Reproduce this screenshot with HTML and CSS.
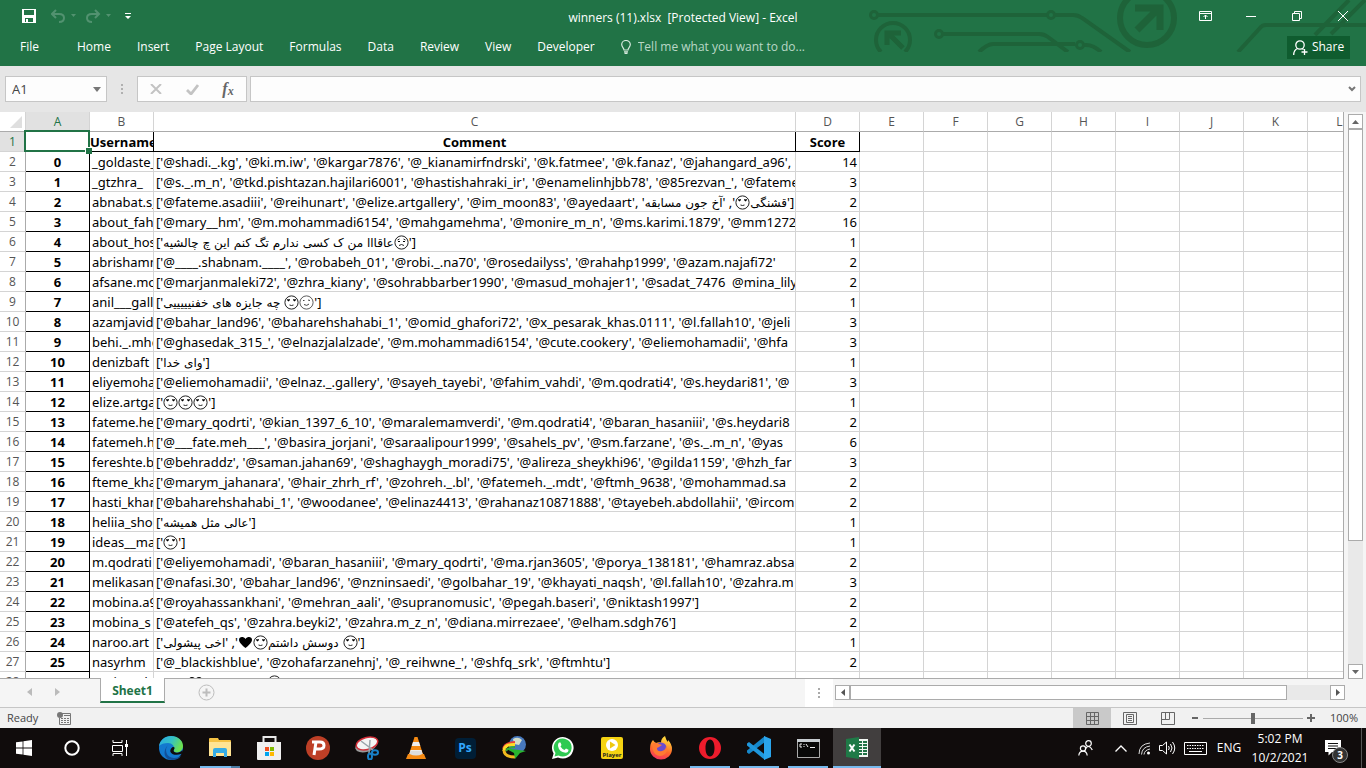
FILE: index.html
```html
<!DOCTYPE html>
<html lang="en">
<head>
<meta charset="utf-8">
<title>winners (11).xlsx [Protected View] - Excel</title>
<link rel="stylesheet" href="styles.css">
</head>
<body>
<svg class="sprite" aria-hidden="true">
  <symbol id="love" viewBox="0 0 15 15"><circle cx="7.500" cy="7.500" r="6.600" fill="#fff" stroke="#222"/><path d="M3 4.500q1-1 1.500 0q1-1 1.500 0q0 1-1.500 2q-1.500-1-1.500-2M9 4.500q1-1 1.500 0q1-1 1.500 0q0 1-1.500 2q-1.500-1-1.500-2" fill="#000"/><path d="M5.500 10q2 1 4 0" fill="none" stroke="#222"/></symbol>
  <symbol id="wink" viewBox="0 0 15 15"><circle cx="7.500" cy="7.500" r="6.600" fill="#fff" stroke="#333" stroke-width=".8"/><path d="M4 5.500h1.500M9 5l2 .5M5 9.500q3 2 5-.5" fill="none" stroke="#444"/></symbol>
  <symbol id="sad" viewBox="0 0 15 15"><circle cx="7.500" cy="7.500" r="6.600" fill="#fff" stroke="#222"/><path d="M3.500 5l2-1M9.500 4l2 1M5 10.500q2.500-2 5 0" fill="none" stroke="#222"/><path d="M4 6.500h2M9 6.500h2" stroke="#000"/></symbol>
  <symbol id="heart" viewBox="0 0 15 15"><path d="M7.500 13C4 10 1 7.500 1 4.700C1 1.500 5.500 1 7.500 4C9.500 1 14 1.500 14 4.700C14 7.500 11 10 7.500 13z"/></symbol>
</svg>
<div class="app">
  <header class="ribbon">
    <svg class="circuit" width="501" height="52" viewBox="0 0 501 52" fill="none" stroke="#1e6339" stroke-width="4" aria-hidden="true">
      <circle cx="9" cy="15" r="3.500" stroke-width="3"/><path d="M13 15h169"/><circle cx="186" cy="15" r="3.500" stroke-width="3"/><path d="M190 15h18q5 0 9 3l48 34"/>
      <circle cx="74" cy="34" r="3.500" stroke-width="3"/><path d="M78 34h96q5 0 9 3l20 15"/>
      <path d="M114 52q8-8 14-8h82"/><circle cx="215" cy="45" r="3.500" stroke-width="3"/><path d="M219 45q9-1 17 7"/>
      <path d="M16 52a17 17 0 1 1 24 0"/><path d="M22 45V33h14M24 34l14 14" stroke-width="5"/>
      <circle cx="282" cy="18" r="27" stroke-width="6"/><path d="M270 8h25v22M294 8L272 30" stroke-width="7"/>
      <path d="M373 52l22-24q2-3 6-3h100M450 35l34-35M466 34l34-34" stroke-width="4"/>
    </svg>
    <div class="titlebar">
      <div class="quick">
        <button aria-label="Save"><svg width="14" height="14" viewBox="0 0 14 14"><path d="M0 0h14v14H0zM2 1v5h10V1zM3 9v4h1v-3h2v3h5V9z" fill="#fff" fill-rule="evenodd"/></svg></button>
        <button class="dim undo" aria-label="Undo"><svg width="26" height="14" viewBox="0 0 26 14" fill="none" stroke="#529270" stroke-width="2"><path d="M5 1L1 5l4 4M1 5h7q5 0 5 4t-5 4"/><path d="M20 5h5l-2.500 3z" fill="#529270" stroke="none"/></svg></button>
        <button class="dim" aria-label="Redo"><svg width="26" height="14" viewBox="0 0 26 14" fill="none" stroke="#529270" stroke-width="2"><path d="M9 1l4 4-4 4M13 5H6q-5 0-5 4t5 4"/><path d="M20 5h5l-2.500 3z" fill="#529270" stroke="none"/></svg></button>
        <button aria-label="Customize toolbar"><svg width="6" height="7" viewBox="0 0 6 7"><path d="M0 0h6v1H0zM0 3h6L3 6z" fill="#fff"/></svg></button>
      </div>
      <h1>winners (11).xlsx&nbsp; [Protected View] - Excel</h1>
      <div class="winbuttons">
        <button aria-label="Ribbon display options"><svg width="13" height="10" viewBox="0 0 13 10" fill="none" stroke="#fff"><path d="M.5.5h12v9H.5zM0 2.500h13M6.500 8V4M4.500 6l2-2 2 2"/></svg></button>
        <button aria-label="Minimize"><svg width="10" height="10" viewBox="0 0 10 10"><path d="M0 5.500h10" stroke="#fff"/></svg></button>
        <button aria-label="Restore"><svg width="10" height="10" viewBox="0 0 10 10" fill="none" stroke="#fff"><path d="M.5 2.500h7v7h-7zM2.500 2.500v-2h7v7h-2"/></svg></button>
        <button aria-label="Close"><svg width="10" height="10" viewBox="0 0 10 10"><path d="M0 0l10 10M10 0L0 10" stroke="#fff"/></svg></button>
      </div>
    </div>
    <nav class="tabs">
      <a class="file" href="#">File</a><a href="#">Home</a><a href="#">Insert</a><a href="#">Page Layout</a><a href="#">Formulas</a><a href="#">Data</a><a href="#">Review</a><a href="#">View</a><a href="#">Developer</a>
      <label class="tell"><svg width="10" height="14" viewBox="0 0 10 14" fill="none" stroke="#d9ebe0" stroke-width="1.200"><path d="M3 10C3 8 .7 7 .7 4.500a4.300 4 0 0 1 8.600 0C9.300 7 7 8 7 10zM3 11.800h4M3.500 13.400h3"/></svg><input type="text" placeholder="Tell me what you want to do..." aria-label="Tell me what you want to do"></label>
      <button class="share"><svg width="15" height="15" viewBox="0 0 15 15" fill="none" stroke="#fff" stroke-width="1.300"><circle cx="7" cy="5" r="4.200"/><path d="M.7 15q0-5 4-6.500M9 8.500l1.500 1M11.500 9v6M8.500 12h6"/></svg>Share</button>
    </nav>
  </header>

  <section class="formulabar">
    <div class="namebox"><input type="text" value="A1" aria-label="Name box"><button aria-label="Choose name"><svg width="8" height="5" viewBox="0 0 8 5"><path d="M0 0h8L4 5z" fill="#777"/></svg></button></div>
    <svg class="dots" width="2" height="10" viewBox="0 0 2 10" fill="#b0b0b0"><path d="M0 0h2v2H0zM0 4h2v2H0zM0 8h2v2H0z"/></svg>
    <div class="fxgroup">
      <button aria-label="Cancel"><svg width="12" height="10" viewBox="0 0 12 10"><path d="M1 0l10 10M11 0L1 10" stroke="#c3c3c3" stroke-width="2"/></svg></button>
      <button aria-label="Enter"><svg width="13" height="11" viewBox="0 0 13 11" fill="none"><path d="M1 6l4 4 7-9" stroke="#c3c3c3" stroke-width="2.800"/></svg></button>
      <button class="fx" aria-label="Insert function">f<small>x</small></button>
    </div>
    <div class="formula"><input type="text" aria-label="Formula"><button aria-label="Expand"><svg width="8" height="6" viewBox="0 0 8 6" fill="none"><path d="M1 1l3 3 3-3" stroke="#777" stroke-width="2"/></svg></button></div>
  </section>

  <main class="sheet">
    <div class="gridview">
      <table>
        <colgroup><col class="c-row"><col class="c-std"><col class="c-std"><col class="c-wide"><col class="c-std" span="9"></colgroup>
        <thead><tr><th class="corner"><svg width="12" height="12" viewBox="0 0 12 12"><path d="M12 0v12H0z" fill="#dfdfdf"/></svg></th><th class="on">A</th><th>B</th><th>C</th><th>D</th><th>E</th><th>F</th><th>G</th><th>H</th><th>I</th><th>J</th><th>K</th><th>L</th></tr></thead>
        <tbody>
          <tr class="heads"><th class="on">1</th><td class="cursor"></td><td>Username</td><td>Comment</td><td>Score</td><td></td><td></td><td></td><td></td><td></td><td></td><td></td><td></td></tr>
          <tr><th>2</th><td>0</td><td>_goldaste_</td><td>['@shadi._.kg', '@ki.m.iw', '@kargar7876', '@_kianamirfndrski', '@k.fatmee', '@k.fanaz', '@jahangard_a96', '@</td><td>14</td><td></td><td></td><td></td><td></td><td></td><td></td><td></td><td></td></tr>
          <tr><th>3</th><td>1</td><td>_gtzhra_</td><td>['@s._.m_n', '@tkd.pishtazan.hajilari6001', '@hastishahraki_ir', '@enamelinhjbb78', '@85rezvan_', '@fateme</td><td>3</td><td></td><td></td><td></td><td></td><td></td><td></td><td></td><td></td></tr>
          <tr><th>4</th><td>2</td><td>abnabat.s_</td><td>['@fateme.asadiii', '@reihunart', '@elize.artgallery', '@im_moon83', '@ayedaart', '<span class="fa">قشنگی</span><svg class="emo"><use href="#love"/></svg>', '<span class="fa">آخ جون مسابقه</span>']</td><td>2</td><td></td><td></td><td></td><td></td><td></td><td></td><td></td><td></td></tr>
          <tr><th>5</th><td>3</td><td>about_fahi</td><td>['@mary__hm', '@m.mohammadi6154', '@mahgamehma', '@monire_m_n', '@ms.karimi.1879', '@mm1272</td><td>16</td><td></td><td></td><td></td><td></td><td></td><td></td><td></td><td></td></tr>
          <tr><th>6</th><td>4</td><td>about_hose</td><td>['<span class="fa">عاقااا من ک کسی ندارم تگ کنم این چ چالشیه</span><svg class="emo"><use href="#sad"/></svg>']</td><td>1</td><td></td><td></td><td></td><td></td><td></td><td></td><td></td><td></td></tr>
          <tr><th>7</th><td>5</td><td>abrishamm</td><td>['@____.shabnam.____', '@robabeh_01', '@robi._.na70', '@rosedailyss', '@rahahp1999', '@azam.najafi72'</td><td>2</td><td></td><td></td><td></td><td></td><td></td><td></td><td></td><td></td></tr>
          <tr><th>8</th><td>6</td><td>afsane.moh</td><td>['@marjanmaleki72', '@zhra_kiany', '@sohrabbarber1990', '@masud_mohajer1', '@sadat_7476&nbsp; @mina_lily</td><td>2</td><td></td><td></td><td></td><td></td><td></td><td></td><td></td><td></td></tr>
          <tr><th>9</th><td>7</td><td>anil___gall</td><td>['<span class="fa">چه جایزه های خفنیییییی </span><svg class="emo"><use href="#love"/></svg><svg class="emo"><use href="#wink"/></svg>']</td><td>1</td><td></td><td></td><td></td><td></td><td></td><td></td><td></td><td></td></tr>
          <tr><th>10</th><td>8</td><td>azamjavid</td><td>['@bahar_land96', '@baharehshahabi_1', '@omid_ghafori72', '@x_pesarak_khas.0111', '@l.fallah10', '@jeli</td><td>3</td><td></td><td></td><td></td><td></td><td></td><td></td><td></td><td></td></tr>
          <tr><th>11</th><td>9</td><td>behi._.mhd</td><td>['@ghasedak_315_', '@elnazjalalzade', '@m.mohammadi6154', '@cute.cookery', '@eliemohamadii', '@hfa</td><td>3</td><td></td><td></td><td></td><td></td><td></td><td></td><td></td><td></td></tr>
          <tr><th>12</th><td>10</td><td>denizbaft</td><td>['<span class="fa">وای خدا</span>']</td><td>1</td><td></td><td></td><td></td><td></td><td></td><td></td><td></td><td></td></tr>
          <tr><th>13</th><td>11</td><td>eliyemoham</td><td>['@eliemohamadii', '@elnaz._.gallery', '@sayeh_tayebi', '@fahim_vahdi', '@m.qodrati4', '@s.heydari81', '@</td><td>3</td><td></td><td></td><td></td><td></td><td></td><td></td><td></td><td></td></tr>
          <tr><th>14</th><td>12</td><td>elize.artgall</td><td>['<svg class="emo"><use href="#love"/></svg><svg class="emo"><use href="#love"/></svg><svg class="emo"><use href="#love"/></svg>']</td><td>1</td><td></td><td></td><td></td><td></td><td></td><td></td><td></td><td></td></tr>
          <tr><th>15</th><td>13</td><td>fateme.hey</td><td>['@mary_qodrti', '@kian_1397_6_10', '@maralemamverdi', '@m.qodrati4', '@baran_hasaniii', '@s.heydari8</td><td>2</td><td></td><td></td><td></td><td></td><td></td><td></td><td></td><td></td></tr>
          <tr><th>16</th><td>14</td><td>fatemeh.ha</td><td>['@___fate.meh___', '@basira_jorjani', '@saraalipour1999', '@sahels_pv', '@sm.farzane', '@s._.m_n', '@yas</td><td>6</td><td></td><td></td><td></td><td></td><td></td><td></td><td></td><td></td></tr>
          <tr><th>17</th><td>15</td><td>fereshte.ba</td><td>['@behraddz', '@saman.jahan69', '@shaghaygh_moradi75', '@alireza_sheykhi96', '@gilda1159', '@hzh_far</td><td>3</td><td></td><td></td><td></td><td></td><td></td><td></td><td></td><td></td></tr>
          <tr><th>18</th><td>16</td><td>fteme_kha</td><td>['@marym_jahanara', '@hair_zhrh_rf', '@zohreh._.bl', '@fatemeh._.mdt', '@ftmh_9638', '@mohammad.sa</td><td>2</td><td></td><td></td><td></td><td></td><td></td><td></td><td></td><td></td></tr>
          <tr><th>19</th><td>17</td><td>hasti_khani</td><td>['@baharehshahabi_1', '@woodanee', '@elinaz4413', '@rahanaz10871888', '@tayebeh.abdollahii', '@ircom</td><td>2</td><td></td><td></td><td></td><td></td><td></td><td></td><td></td><td></td></tr>
          <tr><th>20</th><td>18</td><td>heliia_shop</td><td>['<span class="fa">عالی مثل همیشه</span>']</td><td>1</td><td></td><td></td><td></td><td></td><td></td><td></td><td></td><td></td></tr>
          <tr><th>21</th><td>19</td><td>ideas__mah</td><td>['<svg class="emo"><use href="#love"/></svg>']</td><td>1</td><td></td><td></td><td></td><td></td><td></td><td></td><td></td><td></td></tr>
          <tr><th>22</th><td>20</td><td>m.qodrati</td><td>['@eliyemohamadi', '@baran_hasaniii', '@mary_qodrti', '@ma.rjan3605', '@porya_138181', '@hamraz.absa</td><td>2</td><td></td><td></td><td></td><td></td><td></td><td></td><td></td><td></td></tr>
          <tr><th>23</th><td>21</td><td>melikasana</td><td>['@nafasi.30', '@bahar_land96', '@nzninsaedi', '@golbahar_19', '@khayati_naqsh', '@l.fallah10', '@zahra.m</td><td>3</td><td></td><td></td><td></td><td></td><td></td><td></td><td></td><td></td></tr>
          <tr><th>24</th><td>22</td><td>mobina.a98</td><td>['@royahassankhani', '@mehran_aali', '@supranomusic', '@pegah.baseri', '@niktash1997']</td><td>2</td><td></td><td></td><td></td><td></td><td></td><td></td><td></td><td></td></tr>
          <tr><th>25</th><td>23</td><td>mobina_s</td><td>['@atefeh_qs', '@zahra.beyki2', '@zahra.m_z_n', '@diana.mirrezaee', '@elham.sdgh76']</td><td>2</td><td></td><td></td><td></td><td></td><td></td><td></td><td></td><td></td></tr>
          <tr><th>26</th><td>24</td><td>naroo.art</td><td>['<span class="fa">دوسش داشتم</span><svg class="emo"><use href="#love"/></svg><svg class="emo"><use href="#heart"/></svg>', '<span class="fa">اخی پیشولی </span><svg class="emo"><use href="#love"/></svg>']</td><td>1</td><td></td><td></td><td></td><td></td><td></td><td></td><td></td><td></td></tr>
          <tr><th>27</th><td>25</td><td>nasyrhm</td><td>['@_blackishblue', '@zohafarzanehnj', '@_reihwne_', '@shfq_srk', '@ftmhtu']</td><td>2</td><td></td><td></td><td></td><td></td><td></td><td></td><td></td><td></td></tr>
          <tr><th>28</th><td>26</td><td>nasim.ad</td><td>['<span class="fa">عالیه ممنون</span><svg class="emo"><use href="#heart"/></svg><span class="fa">خیلی </span><svg class="emo"><use href="#sad"/></svg>']</td><td>1</td><td></td><td></td><td></td><td></td><td></td><td></td><td></td><td></td></tr>
        </tbody>
      </table>
    </div>
    <div class="vscroll">
      <button aria-label="Scroll up"><svg width="7" height="4" viewBox="0 0 7 4"><path d="M3.500 0L7 4H0z" fill="#666"/></svg></button>
      <div class="vtrack"><div class="vthumb"></div></div>
      <button aria-label="Scroll down"><svg width="7" height="4" viewBox="0 0 7 4"><path d="M0 0h7L3.500 4z" fill="#666"/></svg></button>
    </div>
  </main>

  <div class="sheetbar">
    <div class="sheetnav">
      <button aria-label="Previous sheet"><svg width="5" height="8" viewBox="0 0 5 8"><path d="M5 0v8L0 4z" fill="#bbb"/></svg></button>
      <button aria-label="Next sheet"><svg width="5" height="8" viewBox="0 0 5 8"><path d="M0 0v8l5-4z" fill="#bbb"/></svg></button>
    </div>
    <button class="sheettab">Sheet1</button>
    <button class="addsheet" aria-label="New sheet"><svg width="17" height="17" viewBox="0 0 17 17" fill="none" stroke="#bdbdbd"><circle cx="8.500" cy="8.500" r="7.500"/><path d="M8.500 4.500v8M4.500 8.500h8" stroke-width="2"/></svg></button>
    <div class="splitter"><svg width="2" height="10" viewBox="0 0 2 10" fill="#aaa"><path d="M0 0h2v2H0zM0 4h2v2H0zM0 8h2v2H0z"/></svg></div>
    <div class="hscroll">
      <button aria-label="Scroll left"><svg width="4" height="7" viewBox="0 0 4 7"><path d="M4 0v7L0 3.500z" fill="#555"/></svg></button>
      <div class="htrack"><div class="hthumb"></div></div>
      <button aria-label="Scroll right"><svg width="4" height="7" viewBox="0 0 4 7"><path d="M0 0v7l4-3.500z" fill="#555"/></svg></button>
    </div>
  </div>

  <footer class="status">
    <span>Ready</span>
    <button class="macro" aria-label="Record macro"><svg width="14" height="13" viewBox="0 0 14 13"><path d="M5 1.500h8.500v11h-11V6M7 3.500h6" fill="none" stroke="#777"/><path d="M4 6h2v1H4zM7 6h2v1H7zM10 6h2v1h-2zM4 8h2v1H4zM7 8h2v1H7zM10 8h2v1h-2zM4 10h2v1H4zM7 10h2v1H7zM10 10h2v1h-2z" fill="#777"/><circle cx="3" cy="3" r="3" fill="#777"/></svg></button>
    <div class="views">
      <button class="on" aria-label="Normal"><svg width="13" height="13" viewBox="0 0 13 13" fill="none" stroke="#666"><path d="M.5.5h12v12H.5zM4.500 0v13M8.500 0v13M0 4.500h13M0 8.500h13"/></svg></button>
      <button aria-label="Page layout"><svg width="14" height="13" viewBox="0 0 14 13" fill="none" stroke="#666"><path d="M.5.5h13v12H.5zM3.500 2.500h7v8h-7zM5 4.500h4M5 6.500h4M5 8.500h4"/></svg></button>
      <button aria-label="Page break preview"><svg width="14" height="13" viewBox="0 0 14 13" fill="none" stroke="#666"><path d="M.5.5h13v12H.5zM.5 7.500h8v-7M4.500 0v7"/></svg></button>
    </div>
    <div class="zoom">
      <button aria-label="Zoom out"><svg width="7" height="8" viewBox="0 0 7 8"><path d="M0 4h6" stroke="#666" stroke-width="2"/></svg></button>
      <input type="range" min="0" max="100" value="50" aria-label="Zoom">
      <button aria-label="Zoom in"><svg width="8" height="8" viewBox="0 0 8 8"><path d="M0 4h8M4 0v8" stroke="#666" stroke-width="2"/></svg></button>
    </div>
    <span class="percent">100%</span>
  </footer>

  <nav class="taskbar">
    <button aria-label="Start"><svg width="16" height="16" viewBox="0 0 16 16" fill="#fff"><path d="M0 2.300L6.600 1.400v6.200H0zM7.400 1.300L16 0v7.600H7.400zM0 8.400h6.600v6.200L0 13.700zM7.400 8.400H16V16l-8.600-1.200z"/></svg></button>
    <button aria-label="Search"><svg width="16" height="16" viewBox="0 0 16 16"><circle cx="8" cy="8" r="6.700" fill="none" stroke="#fff" stroke-width="2"/></svg></button>
    <button aria-label="Task view"><svg width="16" height="16" viewBox="0 0 16 16" fill="none" stroke="#fff"><path d="M1 0v2.500h9V0M.5 5.500h10v6H.5zM1 16v-2.500h9V16M14.500 0v16"/><path d="M13 4h3v3h-3z" fill="#fff" stroke="none"/></svg></button>
    <div class="apps">
      <button aria-label="Edge"><svg width="24" height="24" viewBox="0 0 24 24"><defs><linearGradient id="eg" x2="1" y2=".4"><stop stop-color="#27a9e6"/><stop offset=".55" stop-color="#35c1c4"/><stop offset="1" stop-color="#6be04f"/></linearGradient></defs><circle cx="12" cy="12" r="12" fill="#1379cf"/><path d="M0 10C1 4 6 0 12 0c7 0 12 4.500 12 10 0 4-3 6.500-6.500 6.500-2.500 0-3.500-1.500-2.500-3C16 10 13 7 9 7c-4 0-7 1-9 3z" fill="url(#eg)"/><path d="M9 9c-4 4-2 13 6 13 3 0 5-1 7-2-2 3-6 4-9 4C5 24 3 15 9 9z" fill="#12509a"/><path d="M15.500 11.500c.5 1.500-2 3 0 4.500 2 1.500 6 .5 8-2l.5 3.500-2 .5c-4 1.500-9 1-10.500-2-1-3 2.500-6.500 4-4.500z" fill="#100c0c"/></svg></button>
      <button class="run split" aria-label="File Explorer"><svg width="22" height="20" viewBox="0 0 22 20"><path d="M0 1q0-1 1-1h8l1 2h11q1 0 1 1v15H0z" fill="#f5c244"/><path d="M0 4h22v14H0z" fill="#ffe494"/><path d="M4 19v-7q0-2 2-2h10q2 0 2 2v7h-3v-4H7v4z" fill="#35ace6"/></svg></button>
      <button aria-label="Store"><svg width="24" height="24" viewBox="0 0 24 24"><path d="M6.500 7V1h12v6" fill="none" stroke="#e8e8e8" stroke-width="2"/><path d="M0 6h24v17q0 1-1 1H1q-1 0-1-1z" fill="#f0f0f0"/><path d="M8 11h4v4H8z" fill="#f25022"/><path d="M13 11h4v4h-4z" fill="#7fba00"/><path d="M8 16h4v4H8z" fill="#00a4ef"/><path d="M13 16h4v4h-4z" fill="#ffb900"/></svg></button>
      <button aria-label="Psiphon"><svg width="24" height="24" viewBox="0 0 24 24"><circle cx="12" cy="12" r="12" fill="#bd3f26"/><path d="M6 6h8q4 0 4 3.500T13 13H9M10 6L8 19" fill="none" stroke="#fff" stroke-width="3"/></svg></button>
      <button aria-label="Snipping Tool"><svg width="24" height="24" viewBox="0 0 24 24"><ellipse cx="11" cy="10" rx="11" ry="6" transform="rotate(-15 11 10)" fill="#999"/><ellipse cx="12" cy="7.500" rx="11" ry="6" transform="rotate(-15 12 7.500)" fill="#f4f4f4" stroke="#d22e38" stroke-width="1.500"/><path d="M6 5l12 9M15 4l-1 13" stroke="#9aa4aa" stroke-width="1.500"/><g fill="none" stroke="#1881c9" stroke-width="2"><ellipse cx="20" cy="16.500" rx="3" ry="2.200"/><ellipse cx="15" cy="20.500" rx="2" ry="3"/></g></svg></button>
      <button aria-label="VLC"><svg width="20" height="24" viewBox="0 0 20 24"><path d="M8.500 1h3l6 19h-15z" fill="#f58a13"/><path d="M7 6h6l1.300 4H5.700zM4.500 14h11l1 4h-13z" fill="#eee"/><path d="M2 18h16l2 5H0z" fill="#f58a13"/><path d="M3.500 18q6.500 3 13 0l-1-3h-11z" fill="#ddd"/></svg></button>
      <button aria-label="Photoshop"><span class="ps">Ps</span></button>
      <button aria-label="Download Manager"><svg width="24" height="24" viewBox="0 0 24 24" fill="none"><circle cx="15.500" cy="8.500" r="8.500" fill="#4778bd"/><path d="M11 3q5-3 9 1l-3 5-5-1z" fill="#d2dcc9"/><path d="M1.500 13q0-6 11.500-7" stroke="#ed4435" stroke-width="2"/><path d="M2 15q0-7 11-6.500" stroke="#ffdc27" stroke-width="3"/><path d="M2 14q0 7 11 7" stroke="#f2b91e" stroke-width="3"/><path d="M4 15q2-4 9-4" stroke="#35a83b" stroke-width="2"/><path d="M3 12l21 3-6 2-5 6-1-6z" fill="#28b52e"/></svg></button>
      <button aria-label="WhatsApp"><svg width="22" height="22" viewBox="0 0 22 22"><path d="M0 22l1.600-5.500A10.800 10.800 0 1 1 6 20.500z" fill="#fff"/><path d="M2.500 19.500l1-3.500a9 9 0 1 1 3 2.500z" fill="#2fca52"/><path d="M7 5.500l1.500 0 1 2.500-1 1.500q1.500 2.500 4 3.500l1.500-1.500 2.500 1.300q0 3-3 3Q7 15 6 9q-.2-2.500 1-3.500z" fill="#fff"/></svg></button>
      <button aria-label="Player"><span class="player"><svg width="12" height="12" viewBox="0 0 12 12"><circle cx="6" cy="6" r="6" fill="#fff"/><path d="M4 2.500v7L9.500 6z" fill="#eec80f"/></svg>Player</span></button>
      <button aria-label="Firefox"><svg width="24" height="24" viewBox="0 0 24 24"><defs><linearGradient id="ff" x2=".3" y1="1" y2="0"><stop stop-color="#f4266c"/><stop offset=".5" stop-color="#ff6a2a"/><stop offset="1" stop-color="#ffd43a"/></linearGradient></defs><path d="M4 4q1 2 3 3 2-1 5-.5Q12 2 16 0q1 4 3 6V4q4 4 4 9a11 10.500 0 0 1-22 0Q1 7 4 4z" fill="url(#ff)"/><circle cx="12" cy="12" r="5.500" fill="#6a4bd0"/><path d="M4 7q3-1 6 1l3 1-3 2-2 1q0 4 5 3 4-1 4-5 3 4-1 8-5 4-10 0-4-5-2-11z" fill="#ff7a32"/></svg></button>
      <button class="run" aria-label="Opera"><svg width="22" height="22" viewBox="0 0 22 22"><path fill-rule="evenodd" d="M11 0a11 11 0 1 0 0 22 11 11 0 0 0 0-22zM11 2.500c3 0 4.500 4 4.500 8.500s-1.500 8.500-4.500 8.500S6.500 15.500 6.500 11 8 2.500 11 2.500z" fill="#ed1c2c"/></svg></button>
      <button class="run" aria-label="Visual Studio Code"><svg width="24" height="24" viewBox="0 0 24 24"><path d="M0 16.500L2 18 18 6V0L0 14.500z" fill="#1688cb"/><path d="M0 7.500L2 6l16 12.500V24L0 9.500z" fill="#1f97dc"/><path d="M17 0l7 3v18l-7 3z" fill="#2aa5ec"/></svg></button>
      <button class="run" aria-label="Command Prompt"><svg width="23" height="19" viewBox="0 0 23 19"><path d="M.5.5h22v18H.5z" fill="#080808" stroke="#aaa"/><path d="M0 0h23v3H0z" fill="#c7cdd1"/><path d="M5 5H3v3h2M7 5v1M7 7v1M9 5l2 3M13 8.500h5" fill="none" stroke="#eee"/></svg></button>
      <button class="run active" aria-label="Excel"><svg width="22" height="22" viewBox="0 0 22 22"><path d="M11 2h11v18H11z" fill="#f3f8f4"/><path d="M13 4h3v2h-3zM17 4h4v2h-4zM13 7h3v2h-3zM17 7h4v2h-4zM13 10h3v2h-3zM17 10h4v2h-4zM13 13h3v2h-3zM17 13h4v2h-4zM13 16h3v2h-3zM17 16h4v2h-4z" fill="#217346"/><path d="M0 2l13-2v22L0 20z" fill="#1f7a47"/><path d="M3.500 7.500l5 7M8.500 7.500l-5 7" stroke="#fff" stroke-width="2"/></svg></button>
    </div>
    <div class="tray">
      <button class="people" aria-label="People"><svg width="15" height="16" viewBox="0 0 15 16" fill="none" stroke="#fff" stroke-width="1.200"><circle cx="10.500" cy="3.500" r="2.800"/><path d="M7.500 9q1-2.500 3-2.500T14.300 10"/><circle cx="5" cy="8.500" r="2.600"/><path d="M.8 15.500q.5-4.300 4.200-4.300t4.200 4.300"/></svg></button>
      <button class="chev" aria-label="Hidden icons"><svg width="12" height="7" viewBox="0 0 12 7" fill="none"><path d="M.5 6.500L6 1l5.500 5.500" stroke="#fff" stroke-width="1.300"/></svg></button>
      <button class="wifi" aria-label="Network"><svg width="13" height="13" viewBox="0 0 13 13" fill="none" stroke="#ddd"><path d="M1 12Q1 2 12 1M3.500 12.500Q4 5 12 4M6 12.500Q6.500 8 12 7"/><circle cx="10.500" cy="11" r="1.500" fill="#fff" stroke="none"/></svg></button>
      <button class="sound" aria-label="Volume"><svg width="17" height="14" viewBox="0 0 17 14" fill="none" stroke="#fff"><path d="M.5 4.500h3l4-3.500v12l-4-3.500h-3zM9.500 5q1.500 2 0 4M11.500 3q3 4 0 8M13.500 1q4.500 6 0 12"/></svg></button>
      <button class="keys" aria-label="Touch keyboard"><svg width="23" height="13" viewBox="0 0 23 13" fill="none" stroke="#fff"><path d="M.5.500h22v12H.5zM5 9.500h13"/><path d="M3 3.500h17M3 6.500h17" stroke-dasharray="1.500 1"/></svg></button>
      <button class="lang">ENG</button>
      <button class="clock"><span>5:02 PM</span><span>10/2/2021</span></button>
      <button class="notes" aria-label="3 notifications"><svg width="16" height="16" viewBox="0 0 16 16"><path d="M0 0h16v12H7l-3.500 3.500V12H0z" fill="#fff"/><path d="M3 3.500h10M3 6h10M3 8.500h10" stroke="#111"/></svg><b>3</b></button>
    </div>
  </nav>
</div>
</body>
</html>
```
FILE: styles.css
```css
* { box-sizing: border-box; }
body { margin: 0; font: 12px/16px "Open Sans", "Noto Sans", sans-serif; color: #444; overflow: hidden; }
button { border: 0; padding: 0; background: none; color: inherit; font: inherit; display: flex; align-items: center; justify-content: center; }
input { border: 0; padding: 0; margin: 0; background: none; font: inherit; color: inherit; min-width: 0; outline: 0; }
a { color: inherit; text-decoration: none; }
svg { display: block; flex: none; }
.sprite { position: absolute; width: 0; height: 0; }
.app { height: 100vh; display: flex; flex-direction: column; }

/* Title bar and ribbon tabs */
.ribbon { position: relative; height: 66px; flex: none; background: #217346; color: #fff; }
.circuit { position: absolute; right: 0; top: 0; }
.titlebar { position: relative; height: 32px; display: grid; grid-template-columns: 1fr auto 1fr; align-items: center; }
.quick { display: flex; align-items: center; gap: 9px; padding-left: 22px; }
.quick .undo { margin-left: 6px; }
.quick button:last-child { margin-left: 4px; }
.titlebar h1 { margin: 0; font-size: 12px; font-weight: 400; padding-top: 3px; }
.winbuttons { display: flex; justify-content: flex-end; height: 30px; }
.winbuttons button { width: 46px; }
.tabs { position: relative; height: 30px; display: flex; align-items: center; padding: 0 16px 0 20px; gap: 26px; }
.tabs .file { margin-right: 12px; }
.tell { flex: 1; display: flex; align-items: center; gap: 7px; }
.tell input { flex: 1; }
.tell input::placeholder { color: #b9d8c6; opacity: 1; }
.share { width: 63px; height: 23px; gap: 4px; background: #0f5c2f; }

/* Formula bar */
.formulabar { height: 46px; flex: none; background: #e6e6e6; display: flex; align-items: center; padding: 0 5px 0 5px; }
.namebox, .fxgroup, .formula { height: 26px; border: 1px solid #c6c6c6; background: #fdfdfd; display: flex; align-items: center; }
.namebox { width: 102px; padding: 0 5px 0 6px; font-size: 13px; }
.namebox input { flex: 1; }
.dots { margin: 0 14px; }
.fxgroup { width: 110px; }
.fxgroup button { flex: 1; }
.fx { font: italic 700 16px/16px "Liberation Serif", serif; color: #666; }
.fx small { font-size: 12px; padding-top: 4px; }
.formula { flex: 1; margin-left: 3px; padding-right: 4px; }
.formula input { flex: 1; }

/* Worksheet */
.sheet { flex: 1; min-height: 0; display: flex; background: #f5f5f5; }
.gridview { flex: 1; min-width: 0; overflow: hidden; background: #fff; border-right: 1px solid #ababab; border-bottom: 1px solid #ababab; }
table { table-layout: fixed; width: 1372px; border-collapse: separate; border-spacing: 0; }
.c-row { width: 26px; }
.c-std { width: 64px; }
.c-wide { width: 642px; }
th, td { height: 20px; padding: 1px 0 0; line-height: 18px; border: 0 solid #d4d4d4; border-width: 0 1px 1px 0; white-space: nowrap; overflow: hidden; }
th { font-weight: 400; color: #555; text-align: center; }
thead th { border-bottom-color: #ababab; padding-top: 0; }
tbody th { border-right-color: #ababab; }
th.on { background: #e1e1e1; color: #217346; }
.corner svg { margin: 0 3px 0 auto; }
td { padding: 1px 2px 0; font-family: "Noto Sans", "DejaVu Sans", sans-serif; font-size: 13px; color: #000; }
td:nth-child(2), .heads td { font-family: "Open Sans", sans-serif; font-weight: 700; text-align: center; }
td:nth-child(2) { border-color: #000; }
td:nth-child(5) { text-align: right; }
.heads td:nth-child(5) { text-align: center; }
.heads td:nth-child(-n+5) { border-color: #000; }
.heads td:nth-child(3) { padding: 1px 0 0; }
.heads .cursor { position: relative; overflow: visible; }
.cursor::before { content: ""; position: absolute; inset: -2px -1px -1px -2px; border: 2px solid #217346; }
.cursor::after { content: ""; position: absolute; right: -3px; bottom: -3px; width: 6px; height: 6px; background: #217346; border: solid #fff; border-width: 1px 0 0 1px; }
.emo { display: inline-block; width: 15px; height: 15px; vertical-align: -3px; }
.fa { font-family: "DejaVu Sans", sans-serif; font-size: 12px; line-height: 12px; }

/* Scroll bars */
.vscroll { width: 22px; padding: 2px 3px 0 4px; display: flex; flex-direction: column; }
.vscroll button, .hscroll button { width: 15px; height: 15px; background: #fff; border: 1px solid #ababab; flex: none; }
.vtrack { flex: 1; background: #e9e9e9; }
.vthumb { height: 77%; background: #fff; border: 1px solid #ababab; }
.sheetbar { height: 28px; flex: none; background: #f5f5f5; display: flex; align-items: flex-start; }
.sheetnav { width: 100px; height: 26px; display: flex; justify-content: center; gap: 23px; padding-right: 14px; }
.sheettab { position: relative; width: 65px; height: 25px; margin-top: -1px; background: #fff; border: 1px solid #ababab; border-width: 0 1px 2px; border-bottom-color: #217346; color: #217346; font-weight: 700; padding-top: 2px; }
.addsheet { height: 26px; margin-left: 33px; }
.splitter { width: 28px; height: 28px; margin-left: auto; background: #fff; display: flex; align-items: center; justify-content: center; }
.hscroll { width: 39%; max-width: 510px; margin: 6px 21px 0 2px; display: flex; }
.htrack { flex: 1; background: #e9e9e9; }
.hthumb { width: 91%; height: 15px; background: #fff; border: 1px solid #ababab; }

/* Status bar */
.status { height: 21px; flex: none; background: #f1f1f1; border-top: 1px solid #c6c6c6; display: flex; align-items: center; padding: 0 8px 0 7px; font-size: 11px; }
.macro { margin-left: 19px; }
.views { margin-left: auto; display: flex; height: 20px; }
.views button { width: 38px; }
.views .on { background: #c9c9c9; }
.zoom { display: flex; align-items: center; gap: 4px; margin-left: 5px; }
.zoom input { appearance: none; width: 100px; height: 12px; background: linear-gradient(#aaa, #aaa) center / 100% 1px no-repeat; }
.zoom input::-webkit-slider-thumb { appearance: none; width: 4px; height: 11px; background: #666; }
.percent { width: 43px; text-align: right; }

/* Desktop taskbar */
.taskbar { height: 40px; flex: none; background: #100c0c; color: #fff; display: flex; }
.taskbar > button { width: 48px; }
.apps { display: flex; gap: 1px; margin-left: 3px; }
.apps button { width: 48px; position: relative; }
.run::after { content: ""; position: absolute; left: 4px; right: 4px; bottom: 0; height: 2px; background: #76b9ed; }
.split::after { background: linear-gradient(90deg, #76b9ed 78%, #4a7ba3 78%); }
.active { background: #413e3e; }
.active::after { left: 0; right: 0; }
.ps { width: 21px; height: 21px; border-radius: 4px; background: #001e36; color: #31a8ff; font-weight: 700; line-height: 20px; }
.player { width: 22px; height: 22px; border-radius: 2px; background: #f5d312; color: #222; font: 700 6px/8px "Open Sans", sans-serif; display: flex; flex-direction: column; align-items: center; padding-top: 2px; }
.tray { margin-left: auto; display: flex; padding-right: 4px; }
.people { width: 46px; }
.chev { width: 26px; }
.wifi { width: 20px; }
.sound { width: 26px; }
.keys { width: 30px; }
.lang { width: 38px; }
.clock { width: 64px; flex-direction: column; line-height: 19px; }
.notes { width: 50px; padding-right: 8px; position: relative; border-right: 1px solid #555; }
.notes b { position: absolute; left: 20px; top: 19px; width: 16px; height: 16px; border: 1px solid #888; border-radius: 50%; background: #333; font-size: 10px; line-height: 14px; }
```
